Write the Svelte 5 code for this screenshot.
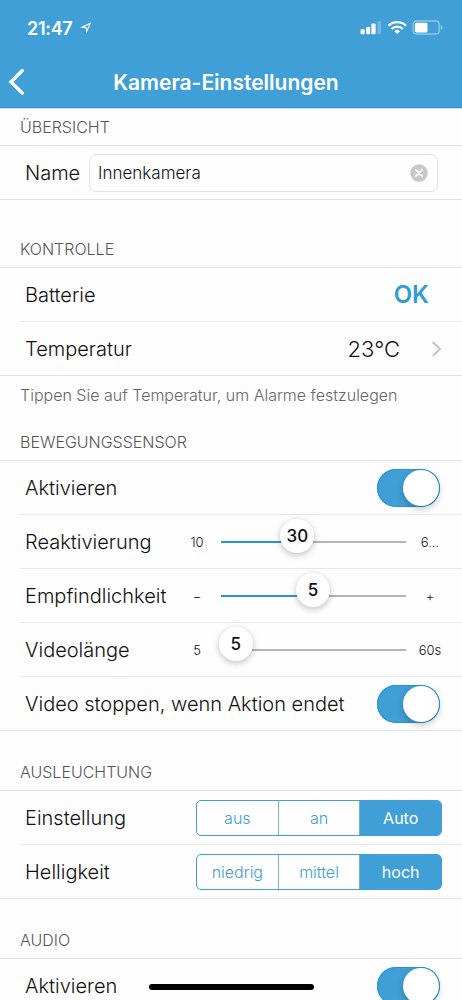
<script lang="ts">
    let name = $state("Innenkamera");
    let motion_on = $state(true);
    let stop_on = $state(true);
    let audio_on = $state(true);
    let light_mode = $state("Auto");
    let brightness = $state("hoch");
    const light_modes = ["aus", "an", "Auto"];
    const brightness_levels = ["niedrig", "mittel", "hoch"];
    // pos is the centre of the knob in percent of the track
    const sliders = [
        { label: "Reaktivierung", min: "10", max: "6...", value: 30, pos: 41.3 },
        { label: "Empfindlichkeit", min: "−", max: "+", value: 5, pos: 49.7 },
        { label: "Videolänge", min: "5", max: "60s", value: 5, pos: 8 }
    ];
</script>

{#snippet toggle(on: boolean, flip: () => void)}
    <button class="toggle" class:off={!on} aria-label="Aktivieren" onclick={flip}><span class="knob"></span></button>
{/snippet}

{#snippet segments(options: string[], current: string, pick: (o: string) => void)}
    <div class="segments">
        {#each options as option}
            <button class="segment" class:selected={option === current} onclick={() => pick(option)}>{option}</button>
        {/each}
    </div>
{/snippet}

<div class="screen">
    <header>
        <div class="status">
            <span class="time">21:47</span>
            <svg class="location" width="14" height="14" viewBox="0 0 14 14">
                <path d="M1 6.6 L12.3 1.2 L7.3 12.6 L6.7 7.2 Z M7.6 6.3 L7.9 8.7 L10.2 3.4 L5 5.9 Z" fill="#fff" fill-rule="evenodd" />
            </svg>
            <svg class="signals" width="84" height="16" viewBox="0 0 84 16">
                <g fill="#fff">
                    <rect x="0.6" y="9.2" width="4" height="5" rx="1" />
                    <rect x="6.2" y="7" width="4" height="7.2" rx="1" />
                    <rect x="11.4" y="3.4" width="4.2" height="10.8" rx="1" />
                    <rect x="17.4" y="1.2" width="3.6" height="13" rx="1" opacity="0.25" />
                    <path d="M37.2 14 L34.4 11.2 A4 4 0 0 1 40 11.2 Z" />
                </g>
                <g fill="none" stroke="#fff" stroke-width="2.3">
                    <path d="M28.4 5.7 A12.6 12.6 0 0 1 46 5.7" />
                    <path d="M31.5 9 A8.1 8.1 0 0 1 42.9 9" />
                </g>
                <rect x="53.2" y="1" width="26" height="13" rx="3.2" fill="none" stroke="#fff" stroke-opacity="0.42" stroke-width="1.3" />
                <rect x="54.9" y="2.7" width="12.6" height="9.7" rx="1.4" fill="#fff" />
                <path d="M80.6 5 Q82.6 5.5 82.6 7.4 Q82.6 9.3 80.6 9.8 Z" fill="#fff" opacity="0.42" />
            </svg>
        </div>
        <div class="nav">
            <svg class="back" width="18" height="28" viewBox="0 0 18 28">
                <path d="M14.3 2.5 L3 14 L14.3 25" fill="none" stroke="#fff" stroke-width="3.4" stroke-linecap="round" stroke-linejoin="miter" />
            </svg>
            <h1>Kamera-Einstellungen</h1>
        </div>
    </header>

    <h2 class="first">ÜBERSICHT</h2>
    <section>
        <div class="row name-row">
            <span class="label">Name</span>
            <div class="field">
                <input bind:value={name} aria-label="Name" />
                <svg width="18" height="18" viewBox="0 0 18 18">
                    <circle cx="9" cy="9" r="8.7" fill="#c8c8c8" />
                    <path d="M5.8 5.8 L12.2 12.2 M12.2 5.8 L5.8 12.2" stroke="#fff" stroke-width="1.8" stroke-linecap="round" />
                </svg>
            </div>
        </div>
    </section>

    <h2 class="control">KONTROLLE</h2>
    <section>
        <div class="row">
            <span class="label">Batterie</span>
            <span class="ok">OK</span>
        </div>
        <div class="row">
            <span class="label">Temperatur</span>
            <span class="degrees">23°C</span>
            <svg class="chevron" width="12" height="18" viewBox="0 0 12 18">
                <path d="M1.8 2 L9 9 L1.8 16" fill="none" stroke="#c4c4c8" stroke-width="2" />
            </svg>
        </div>
    </section>
    <p class="hint">Tippen Sie auf Temperatur, um Alarme festzulegen</p>

    <h2 class="motion">BEWEGUNGSSENSOR</h2>
    <section>
        <div class="row">
            <span class="label">Aktivieren</span>
            {@render toggle(motion_on, () => (motion_on = !motion_on))}
        </div>
        {#each sliders as slider}
            <div class="row">
                <span class="label slider-label">{slider.label}</span>
                <span class="bound">{slider.min}</span>
                <div class="track">
                    <div class="fill" style="width:{slider.pos}%"></div>
                    <div class="handle" style="left:{slider.pos}%">{slider.value}</div>
                </div>
                <span class="bound max">{slider.max}</span>
            </div>
        {/each}
        <div class="row">
            <span class="label stop">Video stoppen, wenn Aktion endet</span>
            {@render toggle(stop_on, () => (stop_on = !stop_on))}
        </div>
    </section>

    <h2 class="light">AUSLEUCHTUNG</h2>
    <section>
        <div class="row">
            <span class="label">Einstellung</span>
            {@render segments(light_modes, light_mode, (o) => (light_mode = o))}
        </div>
        <div class="row">
            <span class="label">Helligkeit</span>
            {@render segments(brightness_levels, brightness, (o) => (brightness = o))}
        </div>
    </section>

    <h2 class="audio">AUDIO</h2>
    <section>
        <div class="row">
            <span class="label">Aktivieren</span>
            {@render toggle(audio_on, () => (audio_on = !audio_on))}
        </div>
    </section>
    <div class="home-bar"></div>
</div>

<style>
    :global(body) {
        background: #fff;
    }
    .screen {
        position: relative;
        width: 462px;
        height: 1000px;
        overflow: hidden;
        background: #fefefe;
        color: #111;
        font-family: Inter, "Liberation Sans", sans-serif;
    }
    .screen * {
        box-sizing: border-box;
    }
    button {
        border: none;
        padding: 0;
        font-family: inherit;
    }
    header {
        height: 109px;
        background: #409fd6;
        border-bottom: 1px solid #ccdff2;
        box-shadow: inset 0 -1px #2291d2;
        color: #fff;
    }
    .status {
        display: flex;
        align-items: center;
        height: 56px;
        padding: 0 18px 0 27px;
    }
    .time {
        width: 48px;
        font-size: 18px;
        font-weight: 600;
        letter-spacing: -0.3px;
    }
    .location {
        margin-left: 4px;
    }
    .signals {
        margin-left: auto;
    }
    .nav {
        display: flex;
        align-items: center;
        height: 52px;
        padding: 0 36px 0 8px;
    }
    h1 {
        flex: 1;
        margin: 0;
        text-align: center;
        font-size: 21px;
        font-weight: 600;
    }
    h2 {
        display: flex;
        align-items: flex-end;
        margin: 0;
        padding: 0 20px 8px;
        font-size: 16px;
        line-height: 20px;
        font-weight: 300;
        color: #55565a;
    }
    h2.first {
        height: 36px;
    }
    h2.control {
        height: 67px;
    }
    h2.motion {
        height: 45px;
    }
    h2.light, h2.audio {
        height: 59px;
    }
    section {
        border-top: 1px solid #e6e6e7;
        border-bottom: 1px solid #e6e6e7;
    }
    .row {
        display: flex;
        align-items: center;
        height: 54px;
        margin-left: 20px;
        padding: 0 20px 0 5px;
        border-bottom: 1px solid #e9e9ea;
    }
    .row:last-child {
        height: 53px;
        border-bottom: none;
    }
    .label {
        margin-right: auto;
        font-size: 20px;
        font-weight: 300;
        white-space: nowrap;
    }
    .name-row {
        padding-right: 24px;
    }
    .field {
        display: flex;
        align-items: center;
        width: 349px;
        height: 38px;
        padding: 0 9px 0 8px;
        border: 1px solid #e4e4e5;
        border-radius: 7px;
    }
    input {
        flex: 1;
        min-width: 0;
        padding: 0;
        border: none;
        outline: none;
        background: none;
        font-family: inherit;
        font-size: 17px;
        font-weight: 300;
        color: #111;
    }
    .ok {
        margin-right: 13px;
        font-size: 24px;
        font-weight: 600;
        color: #319bd5;
    }
    .degrees {
        margin-right: 31px;
        font-size: 22px;
        font-weight: 300;
    }
    .chevron {
        margin-right: -1px;
    }
    .hint {
        margin: 0;
        padding: 9px 20px 0;
        height: 39px;
        font-size: 16px;
        line-height: 20px;
        font-weight: 300;
        color: #66676b;
    }
    .toggle {
        width: 63px;
        height: 38px;
        margin-right: 2px;
        padding: 1px;
        border-radius: 19px;
        background: #409fd6;
        box-shadow: inset 0 0 0 1px #2493d6;
        text-align: right;
    }
    .toggle.off {
        background: #e4e4e5;
        box-shadow: none;
        text-align: left;
    }
    .knob {
        display: inline-block;
        width: 36px;
        height: 36px;
        border-radius: 50%;
        background: #fff;
        box-shadow: 0 3px 7px rgba(0, 0, 0, 0.22);
    }
    .bound {
        width: 48px;
        text-align: center;
        font-size: 13px;
        font-weight: 300;
    }
    .track {
        position: relative;
        width: 185px;
        height: 2px;
        background: #b3b3b5;
    }
    .fill {
        height: 100%;
        background: #2b94d3;
    }
    .handle {
        position: absolute;
        top: -22px;
        width: 34px;
        height: 34px;
        margin-left: -17px;
        border-radius: 50%;
        background: #fff;
        box-shadow: 0 2px 7px rgba(0, 0, 0, 0.25);
        text-align: center;
        font-size: 17px;
        line-height: 34px;
        font-weight: 500;
    }
    .max {
        margin-right: -12px;
    }
    .segments {
        display: flex;
        width: 246px;
        height: 36px;
        border: 1px solid #409fd6;
        border-radius: 5px;
        overflow: hidden;
    }
    .segment {
        flex: 1;
        background: none;
        font-size: 16px;
        font-weight: 300;
        color: #409fd6;
    }
    .segment + .segment {
        border-left: 1px solid #6fb2dd;
    }
    .segment.selected {
        background: #409fd6;
        color: #fff;
        font-weight: 400;
    }
    .home-bar {
        position: absolute;
        left: 149px;
        bottom: 10px;
        width: 165px;
        height: 6px;
        border-radius: 3px;
        background: #000;
    }
</style>
